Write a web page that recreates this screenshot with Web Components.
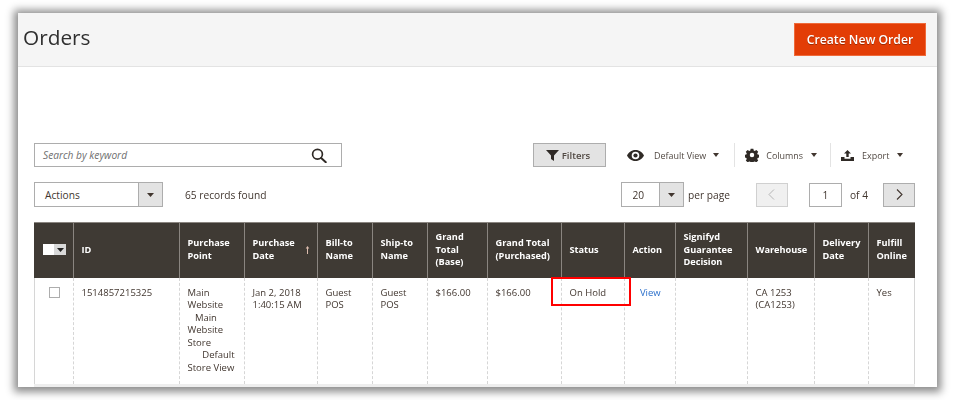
<!DOCTYPE html>
<html><head><meta charset="utf-8">
<style>
html,body{margin:0;padding:0;background:#fff}
body{width:955px;height:400px;overflow:hidden;font-family:"Open Sans",sans-serif;color:#41362f}
</style></head>
<body>
<o-window>
  <o-header slot="head" title-text="Orders" action="Create New Order"></o-header>
  <o-toolbar></o-toolbar>
  <o-grid></o-grid>
</o-window>
<script>
function el(name,html){
  customElements.define(name,class extends HTMLElement{
    connectedCallback(){
      if(this.shadowRoot)return;
      const r=this.attachShadow({mode:'open'});
      r.innerHTML=typeof html==='function'?html(this):html;
    }
  });
}
const caret=(c='#41362f',w=7)=>`<svg width="${w}" height="4" viewBox="0 0 7 4" preserveAspectRatio="none" style="display:block"><path d="M0 0h7L3.500 4z" fill="${c}"/></svg>`;

el('o-window',`<style>
:host{display:flex;flex-direction:column;box-sizing:border-box;width:919px;height:374px;margin:13px 0 0 18px;background:#fff;
box-shadow:0 1px 8px 4px #8c8c8c;overflow:hidden}
</style><slot name="head"></slot><slot></slot>`);

el('o-header',h=>`<style>
:host{display:flex;align-items:center;justify-content:space-between;box-sizing:border-box;height:54px;padding:0 11px 1px 5px;background:#f5f5f5;border-bottom:1px solid #e3e3e3;flex:none}
h1{margin:-4px 0 0;font:400 20.800px/1 "Open Sans",sans-serif;color:#2f2f2f;filter:blur(.3px)}
button{box-sizing:border-box;width:132px;height:33px;margin:0;padding:0;border:1px solid #ef6a3a;background:#e33d06;color:#fff;font:600 12.200px "Open Sans",sans-serif;text-shadow:0 1px 0 #9c2a04;filter:blur(.3px)}
</style><h1>${h.getAttribute('title-text')}</h1><button>${h.getAttribute('action')}</button>`);

el('o-search',`<style>
:host{display:flex;align-items:center;box-sizing:border-box;width:308px;height:24px;border:1px solid #adadad;padding:0 14px 0 8px;background:#fff}
span{flex:1;font:italic 400 10.200px "Open Sans",sans-serif;color:#6f6f6f}
svg{display:block}
</style><span>Search by keyword</span><svg width="16" height="15" viewBox="0 0 16 15"><circle cx="6.500" cy="6.300" r="4.900" fill="none" stroke="#2f2a26" stroke-width="1.700"/><path d="M10.200 10L14.800 14.200" stroke="#2f2a26" stroke-width="2" stroke-linecap="round"/></svg>`);

el('o-select',h=>`<style>
:host{display:flex;box-sizing:border-box;width:${h.getAttribute('w')}px;height:25px;border:1px solid #adadad;background:#fff}
span{flex:1;display:flex;align-items:center;padding-left:${h.getAttribute('pad')||10}px;font:400 10.200px "Open Sans",sans-serif;color:#41362f}
i{display:flex;align-items:center;justify-content:center;width:23px;background:#e3e3e3;border-left:1px solid #adadad}
</style><span>${h.getAttribute('label')}</span><i>${caret()}</i>`);

el('o-menu',h=>`<style>
:host{display:flex;align-items:center;height:24px;font:400 8.950px "Open Sans",sans-serif;color:#514943}
.ic{display:flex;margin-right:${h.getAttribute('gap')}px}
.ca{margin-left:${h.getAttribute('cgap')}px}
</style><span class="ic"><slot></slot></span><span>${h.getAttribute('label')}</span><span class="ca">${caret('#41362f',6)}</span>`);

el('o-page',h=>`<style>
:host{display:flex;align-items:center;justify-content:center;box-sizing:border-box;width:32px;height:24px;border:1px solid #adadad;font:400 10.200px "Open Sans",sans-serif;color:#41362f;background:#fff}
:host([kind=prev]){background:#f0f0f0;border-color:#d0d0d0}
:host([kind=next]){background:#e3e3e3}
:host(:not([kind])){width:33px}
svg{display:block}
</style>${h.getAttribute('kind')==='prev'?'<svg width="7" height="11" viewBox="0 0 7 11"><path d="M6 .500L1 5.500l5 5" fill="none" stroke="#b5b5b5" stroke-width="1"/></svg>':h.getAttribute('kind')==='next'?'<svg width="7" height="11" viewBox="0 0 7 11"><path d="M1 .500l5 5-5 5" fill="none" stroke="#41362f" stroke-width="1.100"/></svg>':'<slot></slot>'}`);

el('o-toolbar',`<style>
:host{display:block;padding:76px 22px 0 16px;font:400 10.200px "Open Sans",sans-serif;color:#41362f}
.row{display:flex;align-items:center;filter:blur(.3px)}
.r1{height:24px}
.r2{height:25px;margin-top:15px}
.filters{display:flex;align-items:center;justify-content:center;gap:3px;box-sizing:border-box;width:73px;height:24px;margin-left:191px;padding-right:3px;background:#e3e3e3;border:1px solid #adadad;font:600 9.600px "Open Sans",sans-serif;color:#514943}
.sep{width:1px;height:24px;background:#e3e3e3}
.push{margin-left:auto}
svg{display:block}
</style>
<div class="row r1">
  <o-search></o-search>
  <div class="filters"><svg width="13" height="11" viewBox="0 0 13 11"><path d="M0 0h13L8 5.500V11L5 9V5.500z" fill="#2f2a26"/></svg>Filters</div>
  <o-menu label="Default View" gap="10" cgap="7" style="margin-left:21px"><svg width="17" height="11" viewBox="0 0 17 11"><path fill-rule="evenodd" d="M8.500 0C12.600 0 15.700 2.700 17 5.500 15.700 8.300 12.600 11 8.500 11S1.300 8.300 0 5.500C1.300 2.700 4.400 0 8.500 0zM8.500 1.700a3.800 3.800 0 1 0 0 7.600 3.800 3.800 0 0 0 0-7.600z" fill="#2f2a26"/><circle cx="8.500" cy="5.500" r="2.100" fill="#2f2a26"/></svg></o-menu>
  <div class="sep" style="margin-left:14.500px"></div>
  <o-menu label="Columns" gap="7" cgap="8" style="margin-left:10.500px"><svg width="14" height="14" viewBox="0 0 14 14"><path fill-rule="evenodd" fill="#2f2a26" d="M5.500 0h3l.4 2 1.200.5 1.700-1.100 2.100 2.100-1.100 1.700.5 1.200 2 .4v3l-2 .4-.5 1.200 1.100 1.700-2.100 2.100-1.700-1.100-1.200.5-.4 2h-3l-.4-2-1.200-.5-1.700 1.100-2.100-2.100 1.100-1.700-.5-1.200-2-.4v-3l2-.4.5-1.200-1.100-1.700 2.100-2.100 1.700 1.100 1.200-.5zM7 4.500a2.500 2.500 0 1 0 0 5 2.500 2.500 0 0 0 0-5z" transform="translate(.7 .7) scale(.9)"/></svg></o-menu>
  <div class="sep" style="margin-left:12.500px"></div>
  <o-menu label="Export" gap="8" cgap="7.500" style="margin-left:10.500px"><svg width="13" height="11" viewBox="0 0 13 11"><path d="M6.500 0L10 3.600H7.700V7H5.300V3.600H3zM0 7h3.500v1.800h6V7H13v4H0z" fill="#2f2a26"/></svg></o-menu>
</div>
<div class="row r2">
  <o-select w="129" label="Actions"></o-select>
  <span style="margin-left:22px">65 records found</span>
  <o-select class="push" w="63.500" label="20" pad="11"></o-select>
  <span style="margin-left:4px">per page</span>
  <o-page kind="prev" style="margin-left:26px"></o-page>
  <o-page style="margin-left:21px">1</o-page>
  <span style="margin:0 15px 0 8px">of 4</span>
  <o-page kind="next"></o-page>
</div>`);

const cols=[39,106,65,73,55,55,60,74,63,51,72,67,54,47];
const heads=['','ID','Purchase<br>Point','Purchase<br>Date','Bill-to<br>Name','Ship-to<br>Name','Grand<br>Total<br>(Base)','Grand Total<br>(Purchased)','Status','Action','Signifyd<br>Guarantee<br>Decision','Warehouse','Delivery<br>Date','Fulfill<br>Online'];
const n='&nbsp;';
const cells=['','1514857215325',`Main<br>Website<br>${n}${n}${n}Main<br>Website<br>Store<br>${n}${n}${n}${n}${n}${n}Default<br>Store View`,'Jan 2, 2018<br>1:40:15 AM','Guest<br>POS','Guest<br>POS','$166.00','$166.00','On Hold',`${n}${n}${n}<a>View</a>`,'','CA 1253<br>(CA1253)','','Yes'];
el('o-grid',`<style>
:host{display:block;margin:15px 22px 0 16px;position:relative;font:400 9.500px/12.500px "Open Sans",sans-serif;color:#41362f}
table{display:table;border-collapse:separate;border-spacing:0;table-layout:fixed;width:881px}
th{box-sizing:border-box;height:56px;padding:0 2px 1.500px 7.500px;background:#3f3a34;color:#fff;font-weight:700;font-size:9.200px;text-align:left;vertical-align:middle;border-top:1px solid #8a8580;border-left:1px solid #8a8580;position:relative}
th:first-child{border-left:0}
td{box-sizing:border-box;height:106px;padding:8.500px 4px 0 7.500px;vertical-align:top;border-left:1px dashed #d6d6d6;background:#fff}
td:first-child{border-left:1px solid #d6d6d6}
td:last-child{border-right:1px solid #d6d6d6}
.t{filter:blur(.25px);display:block}
a{color:#2a6fcb}
.sort{position:absolute;right:7px;top:22.500px;display:block}
.chk{display:flex;align-items:center;margin-left:1.500px}
.chk b{display:block;width:11px;height:11px;background:#fff}
.chk i{display:flex;align-items:center;justify-content:center;width:12px;height:11px;background:#d9d9d9}
.box{display:block;box-sizing:border-box;width:11.500px;height:11.500px;border:1px solid #adadad;margin:0 0 0 6px;background:#fff}
.strip{height:3px;background:#eee}
.mark{position:absolute;left:516.700px;top:55px;box-sizing:border-box;width:80.500px;height:28.500px;border:2.700px solid #f00;pointer-events:none}
</style>
<table><colgroup>${cols.map(w=>`<col style="width:${w}px">`).join('')}</colgroup>
<thead><tr>${heads.map((h,i)=>i===0?`<th><div class="chk"><b></b><i>${caret('#222')}</i></div></th>`:`<th><span class="t">${h}</span>${i===3?'<svg class="sort" width="5" height="8" viewBox="0 0 5 8"><path d="M2.500 0L4.300 2.500H3V8H2V2.500H.7z" fill="#dcbcae"/></svg>':''}</th>`).join('')}</tr></thead>
<tbody><tr>${cells.map((c,i)=>i===0?`<td><span class="box"></span></td>`:`<td><span class="t">${c}</span></td>`).join('')}</tr></tbody></table>
<div class="strip"></div>
<div class="mark"></div>`);
</script>
</body></html>
